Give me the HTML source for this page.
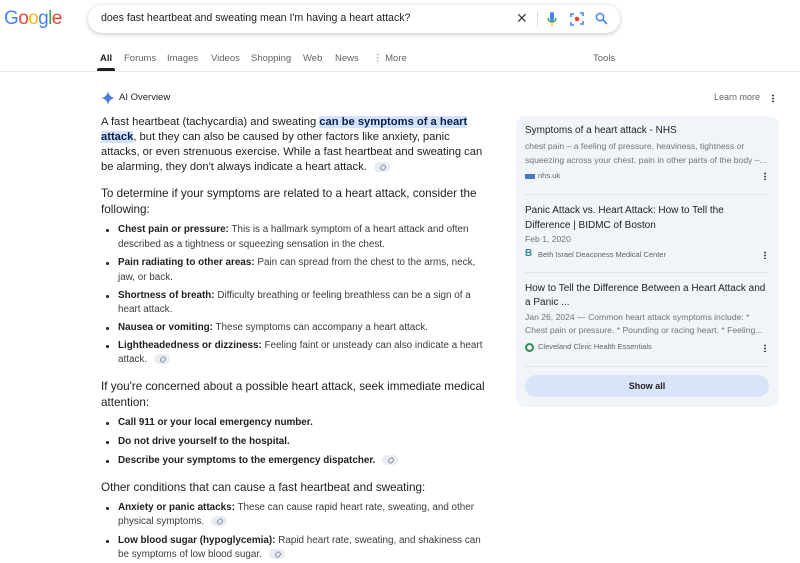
<!DOCTYPE html>
<html><head><meta charset="utf-8"><style>
*{margin:0;padding:0;box-sizing:border-box}
body{width:800px;height:563px;overflow:hidden;background:#fff;font-family:"Liberation Sans",Arial,sans-serif;color:#1f1f1f;position:relative}
.a{position:absolute;white-space:nowrap}
.p{font-size:11.2px;line-height:16px;color:#1f1f1f}
.h{font-size:11.7px;line-height:16px;color:#1f1f1f}
.b{font-size:9.9px;line-height:16px;color:#3c3c3c}
.b b{color:#1f1f1f}
.dot{position:absolute;left:106px;width:3px;height:3px;border-radius:50%;background:#1f1f1f}
.chip{display:inline-block;width:16px;height:10px;border-radius:5px;background:#e9ecf3;vertical-align:middle;margin-left:4px;position:relative}
.chip:after{content:"";position:absolute;left:6px;top:3px;width:4px;height:3px;border:1px solid #8a93a5;border-radius:2px;transform:rotate(-45deg)}
.hl{background:#d3e3fd;color:#0b1f4a;font-weight:bold}
.tab{position:absolute;top:53px;font-size:9.5px;color:#5f6368}
.card{position:absolute;left:516px;top:116px;width:263px;height:291px;background:#f1f4f9;border-radius:10px}
.ct{font-size:10px;color:#1f1f1f;line-height:16px}
.cs{font-size:8.6px;color:#70757a;line-height:14.5px}
.src{font-size:7.5px;color:#5f6368}
.kb{position:absolute;right:13px;width:2px;height:8px;background:radial-gradient(circle,#444 0.9px,transparent 1px) 0 0/2px 3px}
.hr{position:absolute;left:9px;width:244px;height:1px;background:#dfe3ea}
</style></head><body>
<div class="a" style="left:4px;top:8px;font-size:19px;letter-spacing:-0.6px"><span style="color:#4285f4">G</span><span style="color:#ea4335">o</span><span style="color:#fbbc05">o</span><span style="color:#4285f4">g</span><span style="color:#34a853">l</span><span style="color:#ea4335">e</span></div>
<div class="a" style="left:88px;top:5px;width:532px;height:28px;border-radius:14px;box-shadow:0 1px 5px rgba(32,33,36,.28);background:#fff"></div>
<div class="a" style="left:101px;top:12px;font-size:10.6px;color:#1f1f1f">does fast heartbeat and sweating mean I'm having a heart attack?</div>
<div class="a" style="left:516px;top:10px;font-size:14px;color:#444">✕</div>
<div class="a" style="left:537px;top:11px;width:1px;height:16px;background:#dadce0"></div>
<svg class="a" style="left:546px;top:11px" width="12" height="16" viewBox="0 0 12 16"><rect x="4" y="1" width="4" height="9" rx="2" fill="#4285f4"/><path d="M2 7a4 4 0 0 0 8 0" stroke="#34a853" stroke-width="1.5" fill="none"/><rect x="5.3" y="11" width="1.4" height="4" fill="#fbbc05"/></svg>
<svg class="a" style="left:570px;top:12px" width="14" height="14" viewBox="0 0 14 14"><path d="M1 5V2h3M10 1h3v3M13 9v3h-3M4 13H1v-3" stroke="#4285f4" stroke-width="1.6" fill="none"/><circle cx="7" cy="7" r="2.3" fill="#ea4335"/></svg>
<svg class="a" style="left:595px;top:12px" width="13" height="13" viewBox="0 0 13 13"><circle cx="5" cy="5" r="3.6" stroke="#4285f4" stroke-width="1.5" fill="none"/><path d="M8 8l4 4" stroke="#4285f4" stroke-width="1.6"/></svg>
<div class="tab" style="left:100px;color:#1f1f1f;font-weight:bold">All</div>
<div class="a" style="left:97px;top:68px;width:18px;height:3px;background:#1f1f1f;border-radius:2px 2px 0 0"></div>
<div class="tab" style="left:124px">Forums</div>
<div class="tab" style="left:167px">Images</div>
<div class="tab" style="left:211px">Videos</div>
<div class="tab" style="left:251px">Shopping</div>
<div class="tab" style="left:303px">Web</div>
<div class="tab" style="left:335px">News</div>
<div class="tab" style="left:373px">⋮ More</div>
<div class="tab" style="left:593px">Tools</div>
<div class="a" style="left:0;top:71px;width:800px;height:1px;background:#e8eaed"></div>
<svg class="a" style="left:101px;top:91px" width="14" height="14" viewBox="0 0 14 14"><path d="M7 0C7.6 4 10 6.4 14 7 10 7.6 7.6 10 7 14 6.4 10 4 7.6 0 7 4 6.4 6.4 4 7 0Z" fill="#4a7de0"/></svg>
<div class="a" style="left:119px;top:92px;font-size:9.5px;color:#1f1f1f">AI Overview</div>
<div class="a" style="left:714px;top:92px;font-size:9px;color:#5f6368">Learn more</div>
<div class="kb" style="right:26px;top:94px;height:9px"></div>

<div class="a p" style="left:101px;top:114px">A fast heartbeat (tachycardia) and sweating <span class="hl">can be symptoms of a heart</span></div>
<div class="a p" style="left:101px;top:129px"><span class="hl">attack</span>, but they can also be caused by other factors like anxiety, panic</div>
<div class="a p" style="left:101px;top:144px">attacks, or even strenuous exercise. While a fast heartbeat and sweating can</div>
<div class="a p" style="left:101px;top:159px">be alarming, they don't always indicate a heart attack. <span class="chip"></span></div>
<div class="a h" style="left:101px;top:186px">To determine if your symptoms are related to a heart attack, consider the</div>
<div class="a h" style="left:101px;top:202px">following:</div>

<div class="dot" style="top:229px"></div>
<div class="a b" style="left:118px;top:222px"><b>Chest pain or pressure:</b> This is a hallmark symptom of a heart attack and often</div>
<div class="a b" style="left:118px;top:237px">described as a tightness or squeezing sensation in the chest.</div>
<div class="dot" style="top:262px"></div>
<div class="a b" style="left:118px;top:255px"><b>Pain radiating to other areas:</b> Pain can spread from the chest to the arms, neck,</div>
<div class="a b" style="left:118px;top:270px">jaw, or back.</div>
<div class="dot" style="top:295px"></div>
<div class="a b" style="left:118px;top:288px"><b>Shortness of breath:</b> Difficulty breathing or feeling breathless can be a sign of a</div>
<div class="a b" style="left:118px;top:302px">heart attack.</div>
<div class="dot" style="top:327px"></div>
<div class="a b" style="left:118px;top:320px"><b>Nausea or vomiting:</b> These symptoms can accompany a heart attack.</div>
<div class="dot" style="top:345px"></div>
<div class="a b" style="left:118px;top:338px"><b>Lightheadedness or dizziness:</b> Feeling faint or unsteady can also indicate a heart</div>
<div class="a b" style="left:118px;top:352px">attack. <span class="chip"></span></div>

<div class="a h" style="left:101px;top:379px">If you're concerned about a possible heart attack, seek immediate medical</div>
<div class="a h" style="left:101px;top:395px">attention:</div>
<div class="dot" style="top:422px"></div>
<div class="a b" style="left:118px;top:415px"><b>Call 911 or your local emergency number.</b></div>
<div class="dot" style="top:441px"></div>
<div class="a b" style="left:118px;top:434px"><b>Do not drive yourself to the hospital.</b></div>
<div class="dot" style="top:460px"></div>
<div class="a b" style="left:118px;top:453px"><b>Describe your symptoms to the emergency dispatcher.</b> <span class="chip"></span></div>

<div class="a h" style="left:101px;top:480px">Other conditions that can cause a fast heartbeat and sweating:</div>
<div class="dot" style="top:507px"></div>
<div class="a b" style="left:118px;top:500px"><b>Anxiety or panic attacks:</b> These can cause rapid heart rate, sweating, and other</div>
<div class="a b" style="left:118px;top:514px">physical symptoms. <span class="chip"></span></div>
<div class="dot" style="top:540px"></div>
<div class="a b" style="left:118px;top:533px"><b>Low blood sugar (hypoglycemia):</b> Rapid heart rate, sweating, and shakiness can</div>
<div class="a b" style="left:118px;top:547px">be symptoms of low blood sugar. <span class="chip"></span></div>

<div class="card">
<div class="a ct" style="left:9px;top:7px">Symptoms of a heart attack - NHS</div>
<div class="a cs" style="left:9px;top:23px">chest pain – a feeling of pressure, heaviness, tightness or</div>
<div class="a cs" style="left:9px;top:37px">squeezing across your chest. pain in other parts of the body –...</div>
<div class="a" style="left:9px;top:58px;width:10px;height:5px;background:#4a78c0"></div>
<div class="a src" style="left:22px;top:55px">nhs.uk</div>
<div class="kb" style="top:56px"></div>
<div class="hr" style="top:78px"></div>
<div class="a ct" style="left:9px;top:87px">Panic Attack vs. Heart Attack: How to Tell the</div>
<div class="a ct" style="left:9px;top:102px">Difference | BIDMC of Boston</div>
<div class="a cs" style="left:9px;top:116px">Feb 1, 2020</div>
<div class="a" style="left:9px;top:132px;font-size:10px;font-weight:bold;color:#2f8a9c">B</div>
<div class="a src" style="left:22px;top:134px">Beth Israel Deaconess Medical Center</div>
<div class="kb" style="top:135px"></div>
<div class="hr" style="top:156px"></div>
<div class="a ct" style="left:9px;top:165px">How to Tell the Difference Between a Heart Attack and</div>
<div class="a ct" style="left:9px;top:179px">a Panic ...</div>
<div class="a cs" style="left:9px;top:194px">Jan 26, 2024 — Common heart attack symptoms include: *</div>
<div class="a cs" style="left:9px;top:207px">Chest pain or pressure. * Pounding or racing heart. * Feeling...</div>
<div class="a" style="left:9px;top:227px;width:9px;height:9px;border-radius:50%;border:2px solid #2e8b57"></div>
<div class="a src" style="left:22px;top:226px">Cleveland Clinic Health Essentials</div>
<div class="kb" style="top:228px"></div>
<div class="hr" style="top:250px"></div>
<div class="a" style="left:9px;top:259px;width:244px;height:22px;border-radius:11px;background:#d8e5f9;font-size:9px;font-weight:bold;color:#1f1f1f;text-align:center;line-height:22px">Show all</div>
</div>
</body></html>
